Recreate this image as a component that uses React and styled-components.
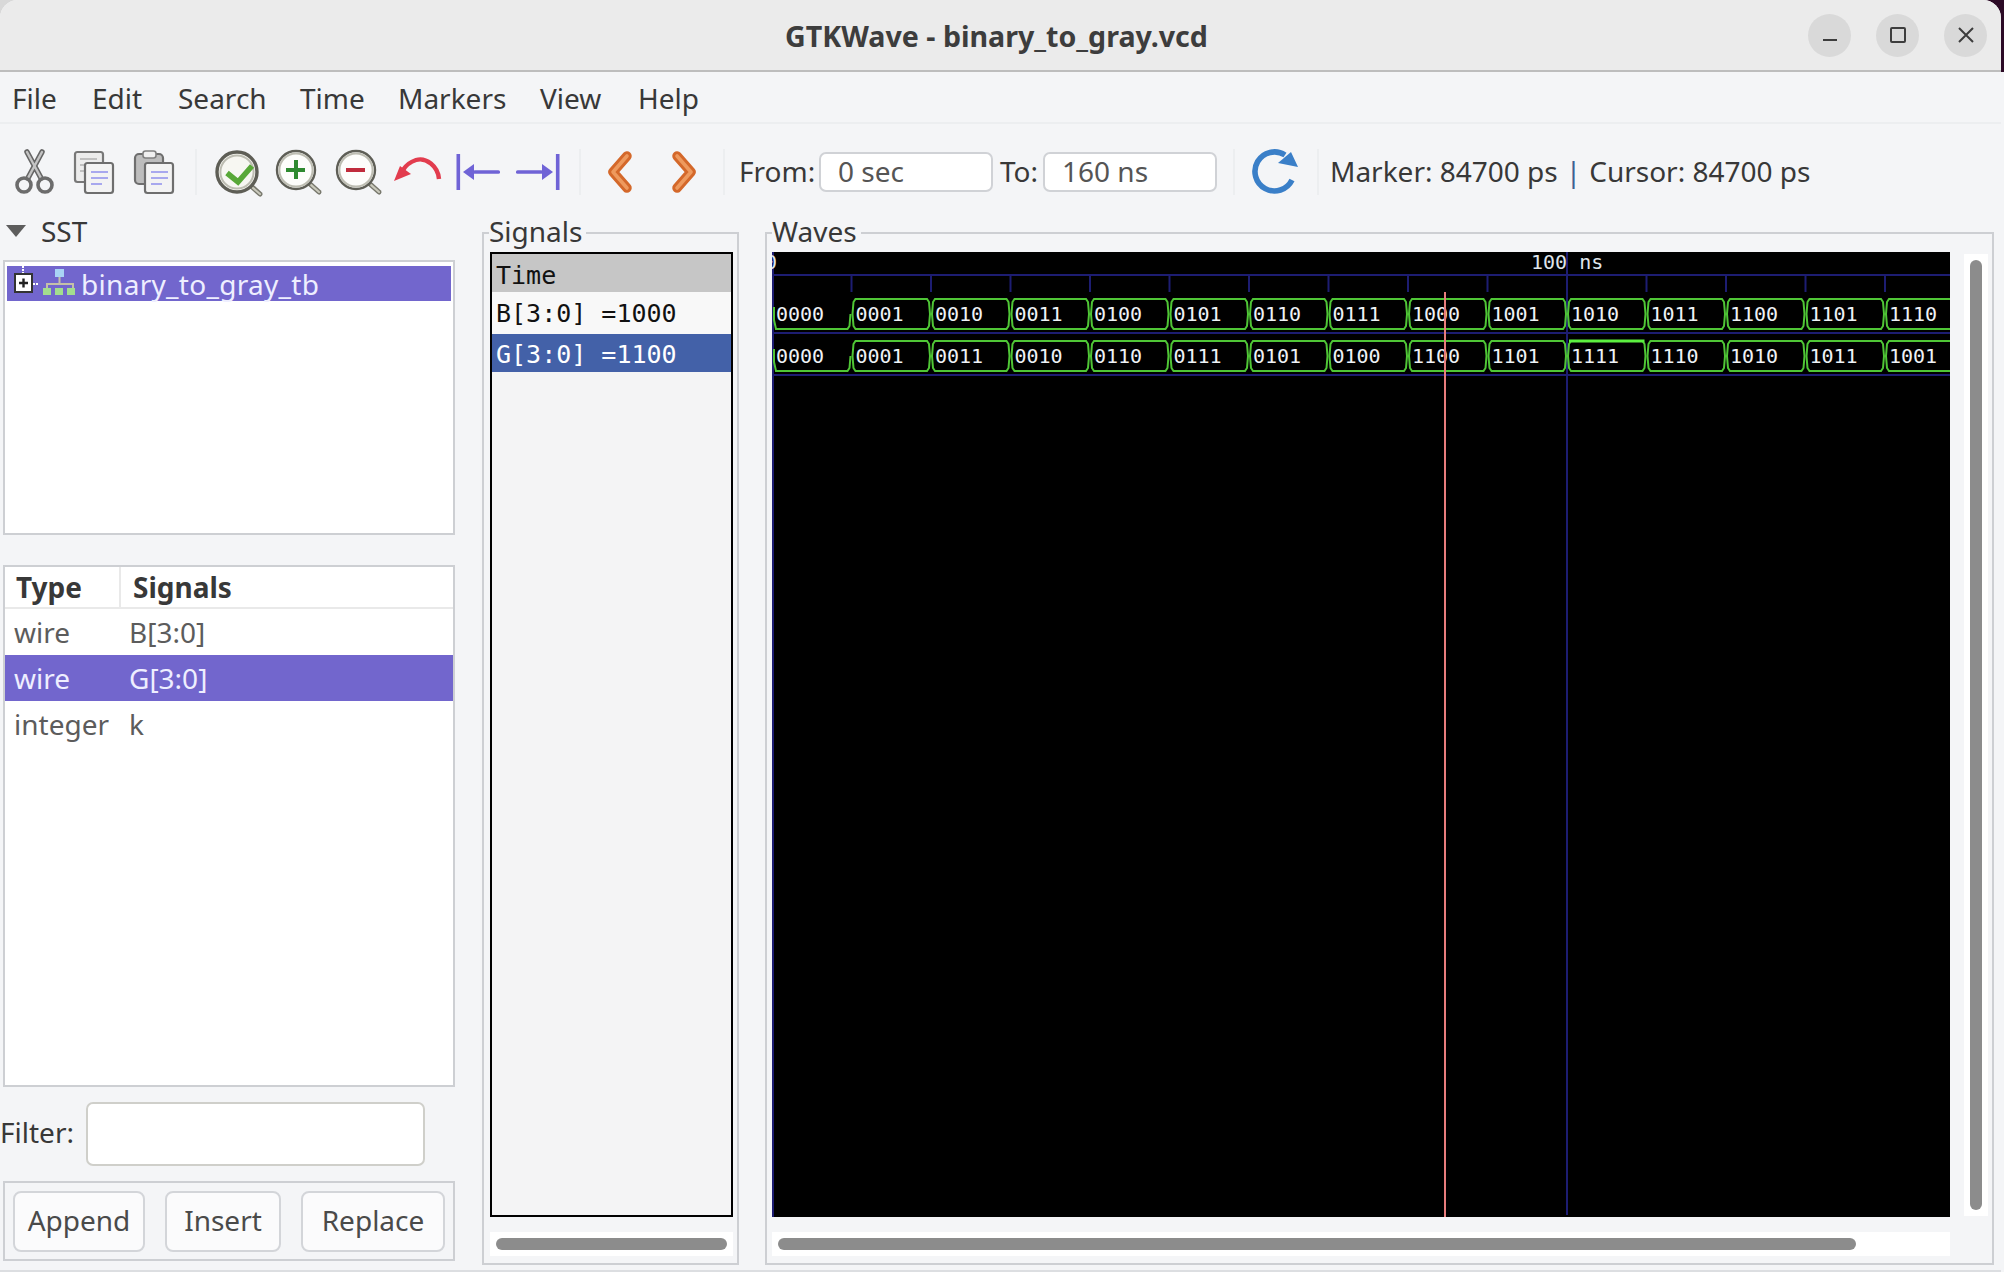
import React from 'react';
import styled, { createGlobalStyle } from 'styled-components';

const uiFont = `'Noto Sans', 'Liberation Sans', sans-serif`;
const monoFont = `'DejaVu Sans Mono', 'Liberation Mono', monospace`;
const edge = '#cdcfd3';
const select = '#7266cd';

const GlobalStyle = createGlobalStyle`
  html, body {
    margin: 0;
    padding: 0;
    overflow: hidden;
    background: #f4f5f7;
  }
`;

const Desktop = styled.div`
  width: 2004px;
  height: 1272px;
  background:
    linear-gradient(to right, #d8d8d8 50%, #2c0a26 50%) top / 100% 72px no-repeat,
    #f4f5f7;
`;

const Window = styled.div`
  width: 2001px;
  height: 1272px;
  box-sizing: border-box;
  display: flex;
  flex-direction: column;
  background: #f4f5f7;
  border-radius: 18px 18px 0 0;
  border-bottom: 2px solid #dcdee1;
  overflow: hidden;
  font-family: ${uiFont};
  font-size: 28px;
  color: #383838;
`;

const TitleBar = styled.header`
  height: 72px;
  flex: none;
  box-sizing: border-box;
  display: grid;
  grid-template-columns: 1fr auto 1fr;
  align-items: center;
  padding-right: 14px;
  background: #ebebeb;
  border-bottom: 2px solid #bdbdbd;
`;

const Title = styled.div`
  grid-column: 2;
  font-weight: 700;
  font-size: 28.6px;
  color: #3d3d3d;
  margin-left: 6px;
`;

const WinButtons = styled.div`
  display: flex;
  justify-content: flex-end;
  gap: 25px;
`;

const WinButton = styled.div`
  width: 43px;
  height: 43px;
  border-radius: 50%;
  background: #d9d9d9;
  display: flex;
  align-items: center;
  justify-content: center;
`;

const MenuBar = styled.nav`
  height: 52px;
  flex: none;
  box-sizing: border-box;
  display: flex;
  align-items: center;
  padding: 1px 0 0 12px;
  border-bottom: 2px solid #eceef0;
`;

const MenuItem = styled.div`
  width: ${(p) => p.$w}px;
`;

const Toolbar = styled.div`
  height: 96px;
  flex: none;
  box-sizing: border-box;
  display: flex;
  align-items: center;
  padding-left: 4px;
`;

const ToolSlot = styled.svg`
  width: 60px;
  height: 60px;
  flex: none;
  margin-left: ${(p) => p.$ml || 0}px;
`;

const Separator = styled.div`
  width: 2px;
  height: 46px;
  flex: none;
  background: #eceef0;
  margin: 0 ${(p) => p.$right}px 0 ${(p) => p.$left}px;
`;

const RangeLabel = styled.span`
  flex: none;
  width: ${(p) => p.$w}px;
  margin-right: 4px;
  padding-bottom: 2px;
`;

const RangeInput = styled.div`
  width: 174px;
  height: 40px;
  flex: none;
  box-sizing: border-box;
  display: flex;
  align-items: center;
  padding: 0 0 2px 17px;
  margin-right: ${(p) => p.$mr}px;
  background: #fff;
  color: #555;
  border: 2px solid #d0d2d6;
  border-radius: 7px;
`;

const Readout = styled.div`
  display: flex;
  white-space: pre;
  padding-bottom: 2px;
`;

const Pipe = styled.span`
  color: #3f5f92;
  margin: 0 8px;
`;

const Main = styled.main`
  flex: 1;
  display: flex;
  min-height: 0;
`;

const LeftPane = styled.section`
  width: 455px;
  flex: none;
  display: flex;
  flex-direction: column;
`;

const SstHead = styled.div`
  height: 40px;
  box-sizing: border-box;
  padding: 0 0 18px 6px;
  display: flex;
  align-items: center;
  gap: 15px;
`;

const Caret = styled.div`
  width: 0;
  height: 0;
  border-left: 10px solid transparent;
  border-right: 10px solid transparent;
  border-top: 12px solid #5d5d5d;
`;

const ListBox = styled.div`
  height: ${(p) => p.$h}px;
  margin: ${(p) => p.$mt || 0}px 0 0 3px;
  box-sizing: border-box;
  flex: none;
  background: #fff;
  border: 2px solid ${edge};
`;

const TreeRow = styled.div`
  height: 35px;
  margin: 4px 2px 0;
  display: flex;
  align-items: center;
  letter-spacing: 0.3px;
  background: ${select};
  color: #eeeeff;
`;

const TreeIcon = styled.svg`
  width: 74px;
  height: 35px;
  flex: none;
`;

const TableHead = styled.div`
  display: grid;
  grid-template-columns: 114px 1fr;
  height: 42px;
  box-sizing: border-box;
  border-bottom: 2px solid #e9e9e9;
  font-weight: 700;
`;

const HeadCell = styled.div`
  display: flex;
  align-items: center;
  padding-left: ${(p) => p.$pad}px;
  border-left: ${(p) => (p.$divided ? '2px solid #e9e9e9' : 'none')};
`;

const TableRow = styled.div`
  display: grid;
  grid-template-columns: 115px 1fr;
  align-items: center;
  height: 46px;
  padding-left: 9px;
  color: ${(p) => (p.$selected ? '#eeeeff' : '#5c5c5c')};
  background: ${(p) => (p.$selected ? select : 'transparent')};
`;

const FilterRow = styled.div`
  display: flex;
  align-items: center;
  margin-top: 15px;
  height: 64px;
  flex: none;
`;

const FilterLabel = styled.span`
  width: 78px;
  flex: none;
  padding-bottom: 4px;
`;

const FilterInput = styled.div`
  width: 339px;
  height: 64px;
  margin-left: 8px;
  box-sizing: border-box;
  background: #fff;
  border: 2px solid #cfcfca;
  border-radius: 7px;
`;

const ButtonFrame = styled.div`
  height: 80px;
  margin: 15px 0 0 3px;
  box-sizing: border-box;
  display: flex;
  align-items: center;
  justify-content: space-between;
  padding: 0 8px;
  border: 2px solid ${edge};
`;

const PaneButton = styled.button`
  width: ${(p) => p.$w}px;
  height: 61px;
  padding: 0 0 2px;
  background: #fbfbfc;
  border: 2px solid #d3d5d9;
  border-radius: 8px;
  font: inherit;
  color: #4a4a4a;
`;

const Frame = styled.section`
  position: relative;
  margin: 12px 0 0 ${(p) => p.$ml}px;
  width: ${(p) => p.$w}px;
  height: 1033px;
  flex: none;
  box-sizing: border-box;
  padding: 18px 0 0 ${(p) => p.$pad}px;
  border: 2px solid ${edge};
`;

const Legend = styled.div`
  position: absolute;
  top: -20px;
  left: 5px;
  padding-right: 4px;
  line-height: 34px;
  background: #f4f5f7;
`;

const SignalBox = styled.div`
  width: 243px;
  height: 965px;
  box-sizing: border-box;
  background: #f4f4f5;
  border: 2px solid #000;
  font-family: ${monoFont};
  font-size: 25px;
  color: #111;
`;

const SignalRow = styled.div`
  height: ${(p) => p.$h}px;
  box-sizing: border-box;
  padding: ${(p) => p.$top || 0}px 0 0 4px;
  display: flex;
  align-items: center;
  white-space: pre;
  background: ${(p) => p.$bg};
  color: ${(p) => p.$fg || '#111'};
`;

const HTrack = styled.div`
  width: ${(p) => p.$w}px;
  height: 24px;
  margin-top: 15px;
  box-sizing: border-box;
  padding: 6px;
  background: #fff;
`;

const HThumb = styled.div`
  width: ${(p) => p.$w}px;
  height: 12px;
  border-radius: 6px;
  background: #8c8c8c;
`;

const WaveGrid = styled.div`
  display: grid;
  grid-template-columns: 1178px 24px;
  column-gap: 14px;
`;

const WaveCanvas = styled.svg`
  display: block;
  width: 1178px;
  height: 965px;
  background: #000;
  font-family: ${monoFont};
  font-size: 20px;
`;

const VTrack = styled.div`
  margin-top: 2px;
  height: 962px;
  box-sizing: border-box;
  padding: 6px;
  background: #fff;
`;

const VThumb = styled.div`
  height: 950px;
  border-radius: 6px;
  background: #8c8c8c;
`;

const menus = [
  ['File', 80],
  ['Edit', 86],
  ['Search', 122],
  ['Time', 98],
  ['Markers', 142],
  ['View', 98],
  ['Help', 60],
];

const busB = ['0000', '0001', '0010', '0011', '0100', '0101', '0110', '0111', '1000', '1001', '1010', '1011', '1100', '1101', '1110'];
const busG = ['0000', '0001', '0011', '0010', '0110', '0111', '0101', '0100', '1100', '1101', '1111', '1110', '1010', '1011', '1001'];
const step = 79.5;
const rulerBlue = '#1d1d72';
const waveGreen = '#4fc636';

const Magnifier = ({ cx, cy, r, hx, hy, fill, ring = 2.4, children }) => (
  <>
    <line x1={cx + r * 0.7} y1={cy + r * 0.7} x2={hx} y2={hy} stroke="#77776c" strokeWidth="5" strokeLinecap="round" />
    <line x1={cx + r * 0.8} y1={cy + r * 0.8} x2={hx} y2={hy} stroke="#c9c9bc" strokeWidth="2.2" strokeLinecap="round" />
    <circle cx={cx} cy={cy} r={r} fill={fill} stroke="#5e5e56" strokeWidth={ring} />
    <circle cx={cx} cy={cy} r={r - ring} fill="none" stroke="#bdbdb2" strokeWidth="2" />
    {children}
  </>
);

const Sheet = ({ x, y, line }) => (
  <>
    <rect x={x} y={y} width="28" height="30" rx="2.5" fill="#f3f3f3" stroke="#6e6e6e" strokeWidth="2.2" />
    <path d={`M${x + 6} ${y + 9}h17M${x + 6} ${y + 15}h17M${x + 6} ${y + 21}h11`} stroke={line} strokeWidth="2" fill="none" />
  </>
);

const CutIcon = () => (
  <ToolSlot viewBox="0 0 60 60">
    <path d="M23 10L37 36M38 10L24 36" stroke="#666" strokeWidth="5.5" fill="none" strokeLinecap="round" />
    <path d="M23 10L37 36M38 10L24 36" stroke="#c4c4c4" strokeWidth="2.4" fill="none" strokeLinecap="round" />
    <circle cx="20" cy="43" r="7" fill="none" stroke="#6c6c6c" strokeWidth="3.6" />
    <circle cx="41" cy="43" r="7" fill="none" stroke="#6c6c6c" strokeWidth="3.6" />
  </ToolSlot>
);

const CopyIcon = () => (
  <ToolSlot viewBox="0 0 60 60">
    <rect x="11" y="10" width="28" height="30" rx="2.5" fill="#ececec" stroke="#787878" strokeWidth="2.2" />
    <path d="M16 17h17M16 23h8M16 29h6" stroke="#c0c0c0" strokeWidth="2" />
    <Sheet x={21} y={21} line="#a8a8ee" />
  </ToolSlot>
);

const PasteIcon = () => (
  <ToolSlot viewBox="0 0 60 60">
    <rect x="11" y="12" width="28" height="30" rx="4" fill="#bdbdbd" stroke="#6e6e6e" strokeWidth="2.2" />
    <rect x="19" y="9" width="13" height="7" rx="2.5" fill="#f0f0f0" stroke="#808080" strokeWidth="1.6" />
    <Sheet x={21} y={21} line="#a8a8ee" />
  </ToolSlot>
);

const CheckIcon = () => (
  <ToolSlot viewBox="0 0 60 60">
    <Magnifier cx={29} cy={30} r={20} hx={52} hy={52} fill="#f7f7f2" ring={3.4}>
      <path d="M19 31L30 40L44 24" fill="none" stroke="#58a838" strokeWidth="5.5" />
    </Magnifier>
  </ToolSlot>
);

const ZoomInIcon = () => (
  <ToolSlot viewBox="0 0 60 60">
    <Magnifier cx={28} cy={28} r={19} hx={51} hy={50} fill="#fdfdfb">
      <path d="M18 28h19M28 18v19" stroke="#2f8a30" strokeWidth="4" />
    </Magnifier>
  </ToolSlot>
);

const ZoomOutIcon = () => (
  <ToolSlot viewBox="0 0 60 60">
    <Magnifier cx={28} cy={28} r={19} hx={51} hy={50} fill="#fdfdfb">
      <path d="M18 28h19" stroke="#c02c3c" strokeWidth="4" />
    </Magnifier>
  </ToolSlot>
);

const UndoIcon = () => (
  <ToolSlot viewBox="0 0 60 60">
    <path d="M51 37C50 24 38 15 28 18C22 20 18 23 15 28" fill="none" stroke="#e23c4e" strokeWidth="4.4" />
    <path d="M6 39L12 24L23 32Z" fill="#e23c4e" />
  </ToolSlot>
);

const JumpIcon = ({ flip }) => (
  <ToolSlot viewBox="0 0 60 60">
    <g transform={flip ? 'matrix(-1 0 0 1 60 0)' : undefined} fill="#6f63d6">
      <rect x="8.5" y="12" width="3.6" height="36" />
      <path d="M15 30L26 22V38Z" />
      <rect x="25" y="28.2" width="27" height="3.6" rx="1.6" />
    </g>
  </ToolSlot>
);

const ChevronIcon = ({ flip, ml }) => (
  <ToolSlot viewBox="0 0 60 60" $ml={ml}>
    <g transform={flip ? 'matrix(-1 0 0 1 60 0)' : undefined} fill="none" strokeLinecap="round" strokeLinejoin="round">
      <path d="M37 14L23 30L37 46" stroke="#d4682a" strokeWidth="9.5" />
      <path d="M37 14L23 30L37 46" stroke="#ee9a5e" strokeWidth="3.6" />
    </g>
  </ToolSlot>
);

const RefreshIcon = () => (
  <ToolSlot viewBox="0 0 60 60">
    <path d="M47 38A19.5 19.5 0 1 1 40 13" fill="none" stroke="#3a7fc8" strokeWidth="5.6" />
    <path d="M46 10L53 25L33 21Z" fill="#3a7fc8" />
  </ToolSlot>
);

const HierarchyIcon = () => (
  <TreeIcon viewBox="0 0 74 35">
    <path d="M16 0v8M26 18h6" stroke="#fff" strokeWidth="2" strokeDasharray="2 1" />
    <rect x="8" y="8" width="17" height="18" fill="#fff" stroke="#333" strokeWidth="2" />
    <path d="M12 17h9M16.5 12.5v9" stroke="#222" strokeWidth="2.4" />
    <rect x="48" y="3" width="9" height="8" fill="#a9d3f5" />
    <path d="M52.5 11v6M40 24v-6h26v6" fill="none" stroke="#c4c0a8" strokeWidth="2" />
    <rect x="36" y="22" width="8" height="7" fill="#a3dd8e" />
    <rect x="48" y="22" width="8" height="7" fill="#a3dd8e" />
    <rect x="60" y="22" width="8" height="7" fill="#a3dd8e" />
  </TreeIcon>
);

const busPath = (x, top, bot) => {
  const x2 = x + step;
  const mid = (top + bot) / 2;
  return `M${x + 4} ${top}L${x2 - 4} ${top}L${x2 - 2} ${top + 3}L${x2 - 1} ${mid}L${x2 - 2} ${bot - 3}L${x2 - 4} ${bot}L${x + 4} ${bot}L${x + 2} ${bot - 3}L${x + 1} ${mid}L${x + 2} ${top + 3}Z`;
};

// the first segment is all zeroes, so only its low rail is drawn
const lowPath = (top, bot) => {
  const mid = (top + bot) / 2;
  return `M2 ${mid - 7}V${mid + 6}L4 ${bot}H${step - 4}L${step - 2} ${bot - 3}L${step - 1} ${mid}`;
};

const BusRow = ({ values, top, bot, baseline }) => (
  <>
    {values.map((value, i) => {
      const x = i * step;
      return (
        <g key={i}>
          <path d={i === 0 ? lowPath(top, bot) : busPath(x, top, bot)} fill="none" stroke={waveGreen} strokeWidth="2" />
          {value === '1111' && <path d={`M${x + 2} ${top}H${x + step - 2}`} stroke="#5cf040" strokeWidth="3" />}
          <text x={x + 4} y={baseline} fill="#eef2f6">
            {value}
          </text>
        </g>
      );
    })}
  </>
);

const Waveform = () => (
  <WaveCanvas viewBox="0 0 1178 965">
    <path d="M0 23H1178M0 81H1178M0 123H1178" stroke={rulerBlue} strokeWidth="2" />
    <path d="M1 0V965M795 0V963" stroke={rulerBlue} strokeWidth="2" />
    {Array.from({ length: 15 }, (_, i) => (
      <line key={i} x1={i * step} y1="23" x2={i * step} y2="40" stroke={rulerBlue} strokeWidth="2" />
    ))}
    <text x="-7" y="17" fill="#dfe4ea">0</text>
    <text x="759" y="17" fill="#dfe4ea" xmlSpace="preserve">100 ns</text>
    <BusRow values={busB} top={47} bot={77} baseline={69} />
    <BusRow values={busG} top={89} bot={119} baseline={111} />
    <line x1="673" y1="40" x2="673" y2="965" stroke="#e77c7c" strokeWidth="2" />
  </WaveCanvas>
);

export default function App() {
  return (
    <Desktop>
      <GlobalStyle />
      <Window>
        <TitleBar>
          <Title>GTKWave - binary_to_gray.vcd</Title>
          <WinButtons>
            <WinButton>
              <svg width="18" height="18" viewBox="0 0 18 18"><path d="M2 14h14" stroke="#3d3d3d" strokeWidth="2" /></svg>
            </WinButton>
            <WinButton>
              <svg width="18" height="18" viewBox="0 0 18 18"><rect x="2" y="2" width="14" height="14" rx="1" fill="none" stroke="#3d3d3d" strokeWidth="2" /></svg>
            </WinButton>
            <WinButton>
              <svg width="18" height="18" viewBox="0 0 18 18"><path d="M2 2L16 16M16 2L2 16" stroke="#3d3d3d" strokeWidth="2" /></svg>
            </WinButton>
          </WinButtons>
        </TitleBar>

        <MenuBar>
          {menus.map(([label, w]) => (
            <MenuItem key={label} $w={w}>{label}</MenuItem>
          ))}
        </MenuBar>

        <Toolbar>
          <CutIcon />
          <CopyIcon />
          <PasteIcon />
          <Separator $left={11} $right={11} />
          <CheckIcon />
          <ZoomInIcon />
          <ZoomOutIcon />
          <UndoIcon />
          <JumpIcon />
          <JumpIcon flip />
          <Separator $left={11} $right={9} />
          <ChevronIcon />
          <ChevronIcon flip ml={4} />
          <Separator $left={9} $right={14} />
          <RangeLabel $w={76}>From:</RangeLabel>
          <RangeInput $mr={7}>0 sec</RangeInput>
          <RangeLabel $w={39}>To:</RangeLabel>
          <RangeInput $mr={16}>160 ns</RangeInput>
          <Separator $left={0} $right={10} />
          <RefreshIcon />
          <Separator $left={12} $right={11} />
          <Readout>
            Marker: 84700 ps<Pipe>|</Pipe>Cursor: 84700 ps
          </Readout>
        </Toolbar>

        <Main>
          <LeftPane>
            <SstHead>
              <Caret />
              SST
            </SstHead>
            <ListBox $h={275}>
              <TreeRow>
                <HierarchyIcon />
                binary_to_gray_tb
              </TreeRow>
            </ListBox>
            <ListBox $h={522} $mt={30}>
              <TableHead>
                <HeadCell $pad={11}>Type</HeadCell>
                <HeadCell $pad={12} $divided>Signals</HeadCell>
              </TableHead>
              <TableRow>
                <span>wire</span>
                <span>B[3:0]</span>
              </TableRow>
              <TableRow $selected>
                <span>wire</span>
                <span>G[3:0]</span>
              </TableRow>
              <TableRow>
                <span>integer</span>
                <span>k</span>
              </TableRow>
            </ListBox>
            <FilterRow>
              <FilterLabel>Filter:</FilterLabel>
              <FilterInput />
            </FilterRow>
            <ButtonFrame>
              <PaneButton $w={132}>Append</PaneButton>
              <PaneButton $w={116}>Insert</PaneButton>
              <PaneButton $w={144}>Replace</PaneButton>
            </ButtonFrame>
          </LeftPane>

          <Frame $ml={27} $w={257} $pad={6}>
            <Legend>Signals</Legend>
            <SignalBox>
              <SignalRow $h={38} $top={4} $bg="#c6c6c6">Time</SignalRow>
              <SignalRow $h={42} $bg="#f8f8f8">B[3:0] =1000</SignalRow>
              <SignalRow $h={38} $top={2} $bg="#4361a8" $fg="#fff">G[3:0] =1100</SignalRow>
            </SignalBox>
            <HTrack $w={243}>
              <HThumb $w={231} />
            </HTrack>
          </Frame>

          <Frame $ml={26} $w={1229} $pad={5}>
            <Legend>Waves</Legend>
            <WaveGrid>
              <Waveform />
              <VTrack>
                <VThumb />
              </VTrack>
            </WaveGrid>
            <HTrack $w={1178}>
              <HThumb $w={1078} />
            </HTrack>
          </Frame>
        </Main>
      </Window>
    </Desktop>
  );
}
